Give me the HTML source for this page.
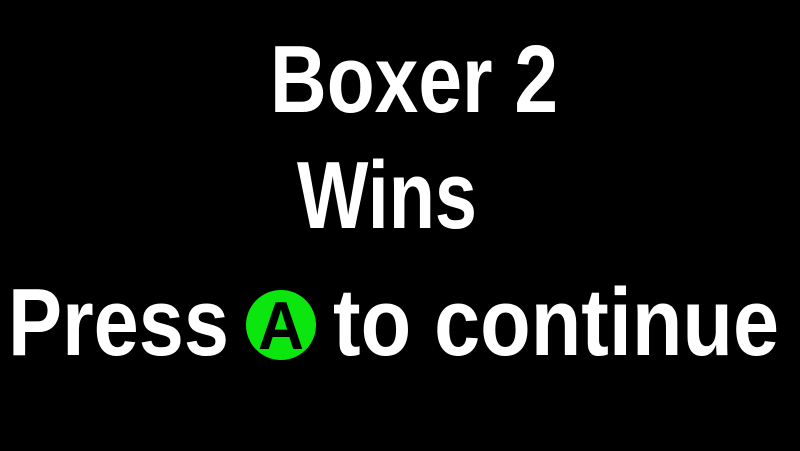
<!DOCTYPE html>
<html><head><style>html,body{margin:0;padding:0;background:#000;width:800px;height:451px;overflow:hidden}</style></head>
<body>
<svg width="800" height="451" viewBox="0 0 800 451" xmlns="http://www.w3.org/2000/svg">
<rect width="800" height="451" fill="#000"/>
<g font-family="Liberation Sans, sans-serif" font-weight="bold" font-size="96" fill="#fff">
<text x="270" y="112" textLength="288" lengthAdjust="spacingAndGlyphs">Boxer 2</text>
<text x="297" y="228" textLength="180" lengthAdjust="spacingAndGlyphs">Wins</text>
<text x="8" y="355" textLength="221" lengthAdjust="spacingAndGlyphs">Press</text>
<text x="333" y="355" textLength="446" lengthAdjust="spacingAndGlyphs">to continue</text>
</g>
<circle cx="281" cy="325" r="35" fill="#0ae60e"/>
<text x="258" y="349" textLength="46" lengthAdjust="spacingAndGlyphs" font-family="Liberation Sans, sans-serif" font-weight="bold" font-size="68" fill="#000">A</text>
</svg>
</body></html>
